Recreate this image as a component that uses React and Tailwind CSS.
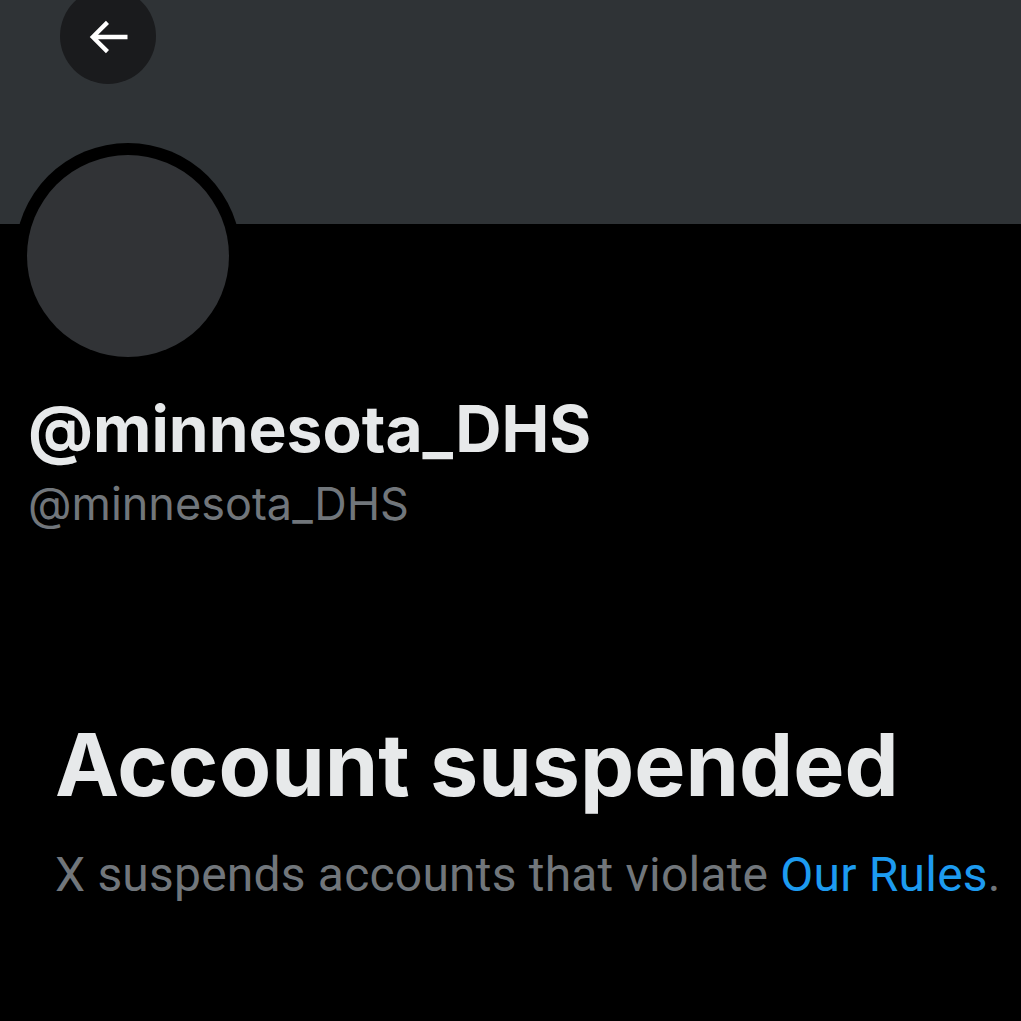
import React from 'react';

export default function App() {
  return (
    <div className="min-h-[1021px] w-[1021px] bg-black overflow-hidden" style={{ fontFamily: 'Inter, Roboto, "Liberation Sans", sans-serif' }}>
      <div className="relative h-[224px] bg-[#2f3336]">
        <button className="absolute left-[60px] top-[-12px] flex h-[96px] w-[96px] items-center justify-center rounded-full bg-[#1a1b1d]">
          <svg width="52" height="52" viewBox="0 0 24 24" className="mt-[2px]">
            <path d="M7.414 13l5.043 5.04-1.414 1.42L3.586 12l7.457-7.46 1.414 1.42L7.414 11H21v2H7.414z" fill="#ffffff" />
          </svg>
        </button>
      </div>
      <div className="relative pl-[15px] -mt-[81px]">
        <div className="flex h-[226px] w-[226px] items-center justify-center rounded-full bg-black">
          <div className="h-[202px] w-[202px] rounded-full bg-[#313336]" />
        </div>
      </div>
      <div className="px-[28px] pt-[22px]">
        <div className="text-[64px] font-bold leading-[76px] text-[#e7e9ea]">@minnesota_DHS</div>
        <div className="mt-[10px] text-[45px] leading-[54px] text-[#71767b]">@minnesota_DHS</div>
      </div>
      <div className="px-[55px] pt-[184px]">
        <div className="text-[86px] font-bold leading-[100px] text-[#e7e9ea]">Account suspended</div>
        <div className="mt-[32px] whitespace-nowrap text-[48px] leading-[56px] tracking-[0.2px] text-[#71767b]" style={{ fontFamily: 'Roboto, "Liberation Sans", sans-serif' }}>
          X suspends accounts that violate <span className="text-[#1d9bf0]">Our Rules</span>.
        </div>
      </div>
    </div>
  );
}
